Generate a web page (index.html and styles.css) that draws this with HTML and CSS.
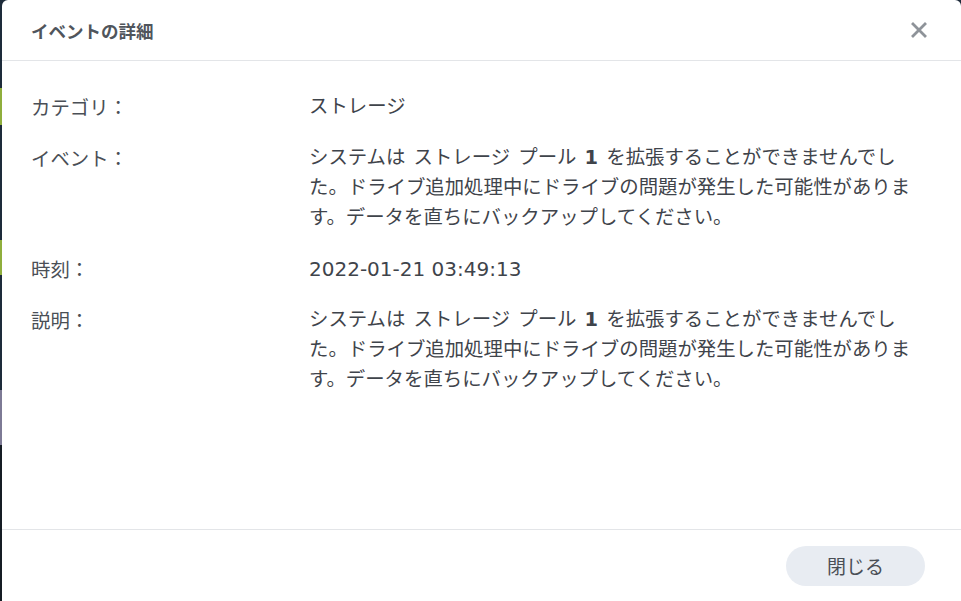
FILE: index.html
```html
<!DOCTYPE html>
<html lang="ja">
<head>
  <meta charset="UTF-8">
  <title>イベントの詳細</title>
  <link rel="stylesheet" href="styles.css">
</head>
<body>
  <div class="dialog">
    <header class="dialog-header">
      <h1>イベントの詳細</h1>
      <button class="close" aria-label="閉じる">
        <svg width="16" height="16" viewBox="0 0 16 16">
          <path d="M2 2 L14 14 M14 2 L2 14" stroke="#8e9399" stroke-width="2.8" stroke-linecap="square"/>
        </svg>
      </button>
    </header>
    <div class="dialog-body">
      <div class="row">
        <div class="label">カテゴリ：</div>
        <div class="value">ストレージ</div>
      </div>
      <div class="row">
        <div class="label">イベント：</div>
        <div class="value">システムは ストレージ プール <b>1</b> を拡張することができませんでした。ドライブ追加処理中にドライブの問題が発生した可能性があります。データを直ちにバックアップしてください。</div>
      </div>
      <div class="row">
        <div class="label">時刻：</div>
        <div class="value num">2022-01-21 03:49:13</div>
      </div>
      <div class="row">
        <div class="label">説明：</div>
        <div class="value">システムは ストレージ プール <b>1</b> を拡張することができませんでした。ドライブ追加処理中にドライブの問題が発生した可能性があります。データを直ちにバックアップしてください。</div>
      </div>
    </div>
    <footer class="dialog-footer">
      <button class="btn">閉じる</button>
    </footer>
  </div>
</body>
</html>
```

FILE: styles.css
```css
html, body {
  height: 100%;
}

body {
  margin: 0;
  background: linear-gradient(to bottom,
    #1d2b3a 0, #1d2b3a 88px,
    #8fae3c 88px, #8fae3c 125px,
    #1d2b3a 125px, #1d2b3a 240px,
    #8fae3c 240px, #8fae3c 275px,
    #1d2b3a 275px, #1d2b3a 390px,
    #7d7a95 390px, #7d7a95 445px,
    #151c24 445px);
  font-family: "DejaVu Sans", "Noto Sans CJK JP", sans-serif;
  color: #4a4f56;
  overflow: hidden;
}

.dialog {
  margin-left: 2px;
  height: 100%;
  background: #fff;
  border-radius: 6px 6px 0 0;
  display: flex;
  flex-direction: column;
}

.dialog-header {
  height: 61px;
  flex-shrink: 0;
  box-sizing: border-box;
  border-bottom: 1px solid #e3e5e8;
  display: flex;
  align-items: center;
  justify-content: space-between;
  padding: 0 34px 0 29px;
}

.dialog-header h1 {
  margin: 0;
  font-family: "Noto Sans CJK JP", sans-serif;
  font-size: 17.5px;
  font-weight: 700;
  color: #50555c;
}

.close {
  border: none;
  background: none;
  padding: 0;
  width: 16px;
  height: 16px;
  display: flex;
  cursor: pointer;
}

.dialog-body {
  flex: 1;
  padding: 31px 40px 0 29px;
}

.row {
  display: flex;
  margin-bottom: 21px;
  font-size: 19.4px;
  line-height: 30px;
}

.label {
  width: 278px;
  flex-shrink: 0;
  font-family: "Noto Sans CJK JP", sans-serif;
  color: #4a4f56;
}

.value {
  width: 604px;
  font-family: "DejaVu Sans", "Noto Sans CJK JP", sans-serif;
  color: #3f444b;
  word-spacing: 2px;
  line-break: anywhere;
}

.value b {
  font-weight: 700;
}

.num {
  font-size: 20px;
  word-spacing: 0;
}

.dialog-footer {
  height: 72px;
  flex-shrink: 0;
  box-sizing: border-box;
  border-top: 1px solid #e3e5e8;
  display: flex;
  align-items: center;
  justify-content: flex-end;
  padding: 0 36px 0 0;
}

.btn {
  width: 139px;
  height: 40px;
  border: none;
  border-radius: 20px;
  background: #e8ecf2;
  color: #4a4f56;
  font-family: "Noto Sans CJK JP", sans-serif;
  font-size: 19px;
  cursor: pointer;
}
```
